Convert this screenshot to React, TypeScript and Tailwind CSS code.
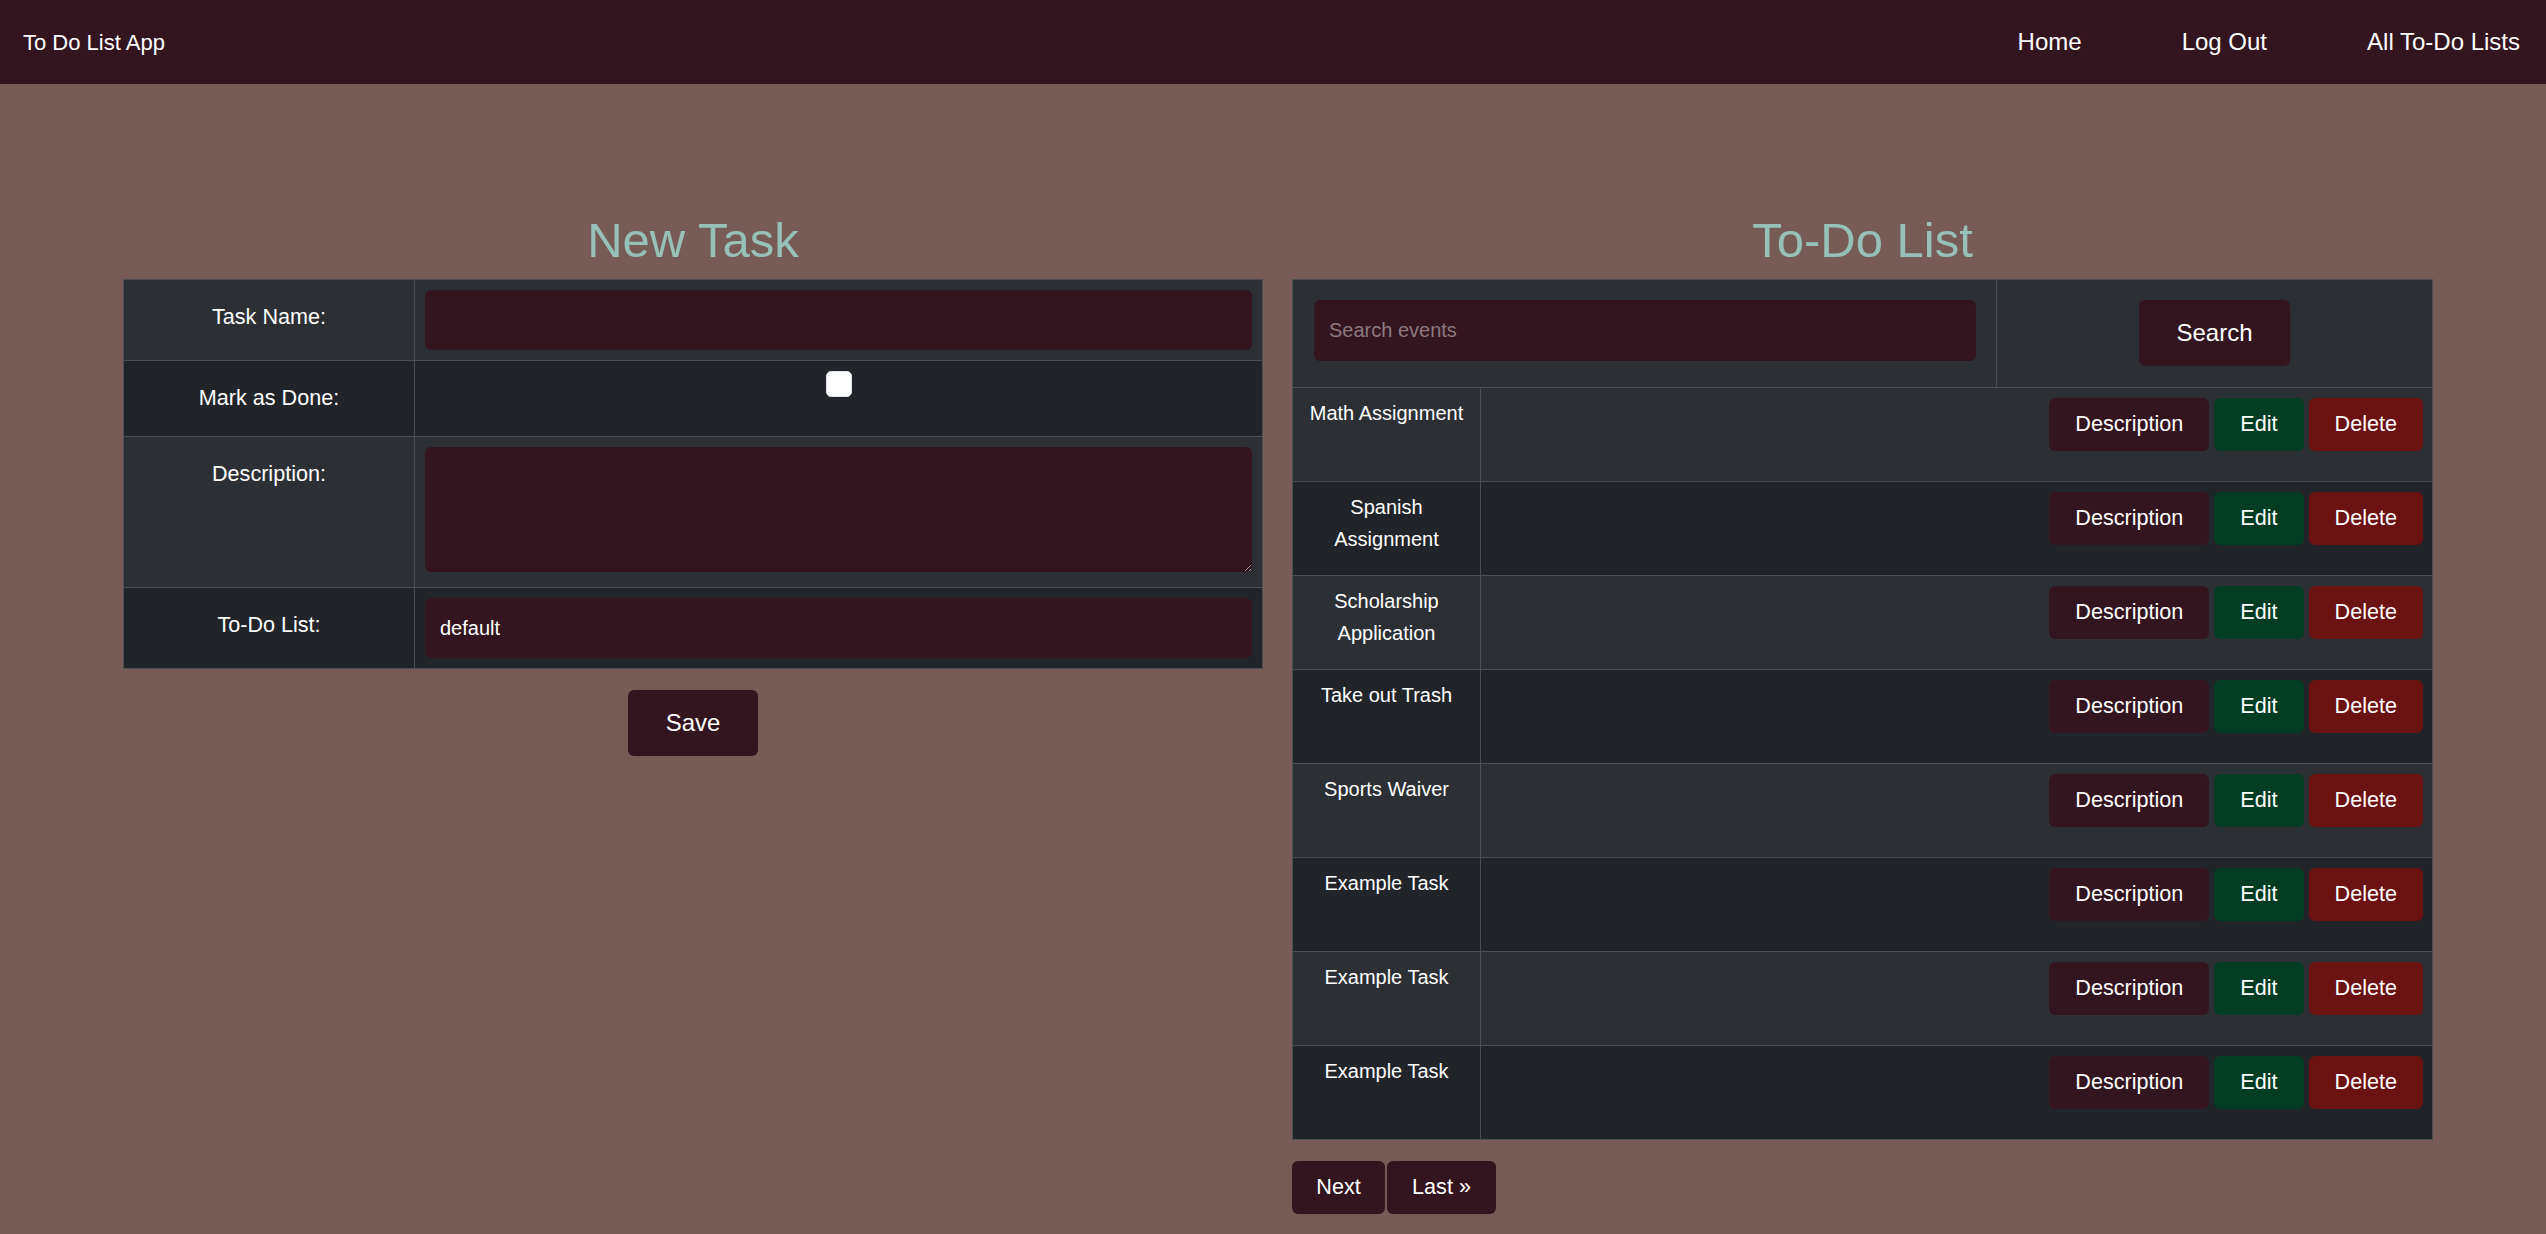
const tasks = [
  "Math Assignment",
  "Spanish Assignment",
  "Scholarship Application",
  "Take out Trash",
  "Sports Waiver",
  "Example Task",
  "Example Task",
  "Example Task",
];

function FormRow({ label, odd, last, children, contentClass }: { label: string; odd: boolean; last?: boolean; children: React.ReactNode; contentClass?: string }) {
  return (
    <div className={`flex ${odd ? "bg-[#2c3034]" : "bg-[#212529]"} ${last ? "" : "border-b border-[#4b4f53]"}`}>
      <div className="w-[291px] shrink-0 border-r border-[#4b4f53] pb-[22px] pt-[21px] text-center text-[21.6px] leading-[32px]">
        {label}
      </div>
      <div className={`flex-1 ${contentClass ?? "p-[10px]"}`}>{children}</div>
    </div>
  );
}

export default function App() {
  return (
    <div className="min-h-screen bg-[#775b57] font-['Liberation_Sans',Arial,sans-serif] text-white">
      <nav className="flex h-[84px] items-center justify-between bg-[#331520] pl-[23px] pr-[26px]">
        <span className="text-[22px]">To Do List App</span>
        <div className="flex gap-[100px] text-[24px]">
          <a>Home</a>
          <a>Log Out</a>
          <a>All To-Do Lists</a>
        </div>
      </nav>

      <main className="flex gap-[29px] pl-[123px] pt-[127px]">
        {/* new task form */}
        <section className="w-[1140px] shrink-0">
          <h1 className="mb-[10px] text-center text-[49px] leading-[58px] text-[#97c1b8]">New Task</h1>
          <div className="border border-[#4b4f53]">
            <FormRow label="Task Name:" odd>
              <input className="block h-[60px] w-full rounded-[6px] bg-[#33151f] px-[15px] text-[20px] text-white outline-none" />
            </FormRow>
            <FormRow label="Mark as Done:" odd={false}>
              <div className="flex justify-center">
                <input type="checkbox" className="h-[26px] w-[26px] appearance-none rounded-[5px] border border-[#dee2e6] bg-white" />
              </div>
            </FormRow>
            <FormRow label="Description:" odd contentClass="px-[10px] pt-[10px] pb-[15px]">
              <textarea className="block h-[125px] w-full rounded-[6px] bg-[#33151f] px-[15px] py-[8px] text-[20px] text-white outline-none" />
            </FormRow>
            <FormRow label="To-Do List:" odd={false} last>
              <input defaultValue="default" className="block h-[60px] w-full rounded-[6px] bg-[#33151f] px-[15px] text-[20px] text-white outline-none" />
            </FormRow>
          </div>
          <button className="mx-auto mt-[21px] block h-[66px] w-[130px] rounded-[6px] bg-[#33151f] text-[24px] text-white">
            Save
          </button>
        </section>

        {/* list */}
        <section className="w-[1141px] shrink-0">
          <h1 className="mb-[10px] text-center text-[49px] leading-[58px] text-[#97c1b8]">To-Do List</h1>
          <div className="border border-[#4b4f53]">
            <div className="flex border-b border-[#4b4f53] bg-[#2c3034]">
              <div className="w-[704px] shrink-0 border-r border-[#4b4f53] pb-[21px] pl-[21px] pr-[20px] pt-[20px]">
                <input
                  placeholder="Search events"
                  className="block h-[61px] w-full rounded-[6px] bg-[#33151f] px-[15px] text-[20px] text-white outline-none placeholder:text-[#8a7a7f]"
                />
              </div>
              <div className="flex flex-1 justify-center pb-[21px] pt-[20px]">
                <button className="h-[66px] w-[151px] rounded-[6px] bg-[#33151f] text-[24px] text-white">Search</button>
              </div>
            </div>
            {tasks.map((t, i) => (
              <div
                key={i}
                className={`flex ${i % 2 === 0 ? "bg-[#2c3034]" : "bg-[#212529]"} ${i === tasks.length - 1 ? "" : "border-b border-[#4b4f53]"}`}
              >
                <div className="w-[188px] shrink-0 border-r border-[#4b4f53] px-[8px] pt-[9px] text-center text-[20px] leading-[32px]">
                  {t}
                </div>
                <div className="flex flex-1 items-start justify-end gap-[5px] pb-[30px] pr-[9px] pt-[10px] text-[21.6px]">
                  <button className="h-[53px] rounded-[6px] bg-[#33151f] px-[26px] text-white">Description</button>
                  <button className="h-[53px] rounded-[6px] bg-[#003d22] px-[26px] text-white">Edit</button>
                  <button className="h-[53px] rounded-[6px] bg-[#6b1212] px-[26px] text-white">Delete</button>
                </div>
              </div>
            ))}
          </div>
          <div className="mt-[21px] flex gap-[2px] text-[21.6px]">
            <button className="h-[53px] w-[93px] rounded-[6px] bg-[#33151f] text-white">Next</button>
            <button className="h-[53px] w-[109px] rounded-[6px] bg-[#33151f] text-white">Last »</button>
          </div>
        </section>
      </main>
    </div>
  );
}
